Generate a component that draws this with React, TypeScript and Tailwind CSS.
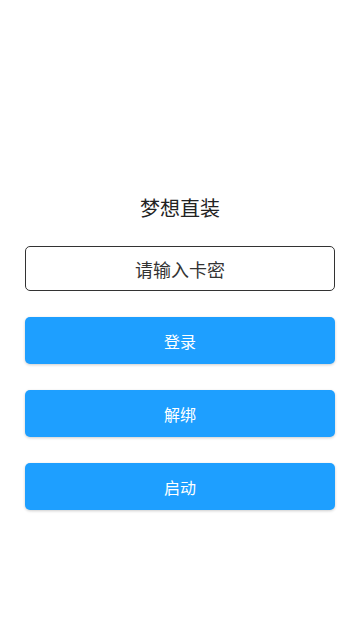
import React from 'react';

const App = () => {
  const buttons = ['登录', '解绑', '启动'];

  return (
    <div
      className="min-h-screen w-[360px] bg-white px-[25px] pt-[194px]"
      style={{ fontFamily: '"Noto Sans CJK SC", "Noto Sans", sans-serif' }}
    >
      {/* Title */}
      <h1 className="text-center text-[20px] leading-[28px] text-[#222]">梦想直装</h1>

      {/* Card key input */}
      <input
        type="text"
        placeholder="请输入卡密"
        className="mt-[24px] block h-[45px] w-full rounded-[5px] border border-[#333] bg-white text-center text-[18px] text-[#333] placeholder:text-[#333] outline-none"
      />

      {/* Actions */}
      <div className="mt-[26px] flex flex-col gap-[26px]">
        {buttons.map((label) => (
          <button
            key={label}
            className="h-[47px] w-full rounded-[5px] bg-[#1E9FFF] text-[16px] text-white shadow-[0_1px_3px_rgba(0,0,0,0.2)]"
          >
            {label}
          </button>
        ))}
      </div>
    </div>
  );
};

export default App;
